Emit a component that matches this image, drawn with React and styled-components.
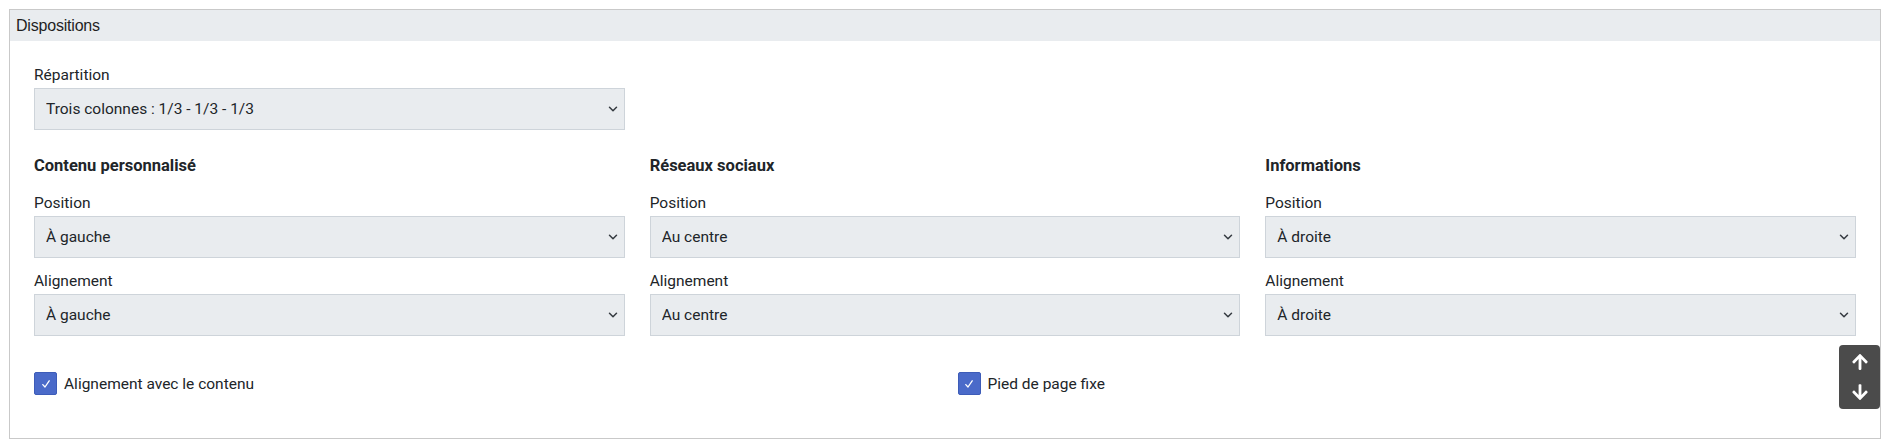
import React from 'react';
import styled, { createGlobalStyle } from 'styled-components';
import { FaArrowUp, FaArrowDown } from 'react-icons/fa';

const GlobalStyle = createGlobalStyle`
  body {
    margin: 0;
    background: #fff;
    font-family: Roboto, "Liberation Sans", Arial, sans-serif;
    color: #212529;
  }
`;

const columns = [
  { title: 'Contenu personnalisé', position: 'À gauche', align: 'À gauche' },
  { title: 'Réseaux sociaux', position: 'Au centre', align: 'Au centre' },
  { title: 'Informations', position: 'À droite', align: 'À droite' },
];

function Chevron() {
  return (
    <svg width="10" height="6" viewBox="0 0 10 6">
      <path d="M1.5 1.2l3.5 3.5 3.5-3.5" fill="none" stroke="#343a40" strokeWidth="1.5" strokeLinecap="round" strokeLinejoin="round" />
    </svg>
  );
}

function Select({ value }) {
  return (
    <SelectWrap>
      <NativeSelect defaultValue={value}>
        <option>{value}</option>
      </NativeSelect>
      <ChevronBox>
        <Chevron />
      </ChevronBox>
    </SelectWrap>
  );
}

function Field({ label, value }) {
  return (
    <FieldGroup>
      <Label>{label}</Label>
      <Select value={value} />
    </FieldGroup>
  );
}

function Check({ label }) {
  return (
    <CheckRow>
      <CheckBox>
        <svg width="10" height="10" viewBox="0 0 10 10">
          <path d="M1.8 5.6l2.2 2.4L8.2 1.8" fill="none" stroke="#fff" strokeWidth="1.3" strokeLinecap="round" strokeLinejoin="round" />
        </svg>
      </CheckBox>
      <CheckLabel>{label}</CheckLabel>
    </CheckRow>
  );
}

function App() {
  return (
    <Page>
      <GlobalStyle />
      <Panel>
        <Header>Dispositions</Header>
        <Body>
          <TopRow>
            <Field label="Répartition" value="Trois colonnes : 1/3 - 1/3 - 1/3" />
          </TopRow>
          <Columns>
            {columns.map((c) => (
              <Column key={c.title}>
                <ColumnTitle>{c.title}</ColumnTitle>
                <Field label="Position" value={c.position} />
                <Field label="Alignement" value={c.align} />
              </Column>
            ))}
          </Columns>
          <Checks>
            <Check label="Alignement avec le contenu" />
            <Check label="Pied de page fixe" />
          </Checks>
        </Body>
        <ScrollButtons>
          <ScrollBtn aria-label="Haut">
            <FaArrowUp />
          </ScrollBtn>
          <ScrollBtn aria-label="Bas">
            <FaArrowDown />
          </ScrollBtn>
        </ScrollButtons>
      </Panel>
    </Page>
  );
}

export default App;

const Page = styled.div`
  padding: 9px 5px 4px 9px;
`;

const Panel = styled.section`
  position: relative;
  border: 1px solid #c9c9c9;
  background: #fff;
`;

const Header = styled.div`
  height: 31px;
  padding: 0 6px;
  display: flex;
  align-items: center;
  background: #e9ecef;
  font-family: "Liberation Sans", Arial, sans-serif;
  font-size: 16px;
  letter-spacing: -0.2px;
  color: #1f1f1f;
`;

const Body = styled.div`
  padding: 23px 24px 43px 24px;
`;

const TopRow = styled.div`
  display: grid;
  grid-template-columns: repeat(3, 1fr);
  column-gap: 25px;
`;

const Columns = styled.div`
  display: grid;
  grid-template-columns: repeat(3, 1fr);
  column-gap: 25px;
  margin-top: 25px;
`;

const Column = styled.div`
  display: flex;
  flex-direction: column;
`;

const ColumnTitle = styled.div`
  font-size: 16.5px;
  font-weight: 700;
  line-height: 22px;
  margin-bottom: 15px;
`;

const FieldGroup = styled.div`
  & + & {
    margin-top: 12px;
  }
`;

const Label = styled.div`
  font-size: 15.5px;
  line-height: 22px;
  margin-bottom: 2px;
`;

const SelectWrap = styled.div`
  position: relative;
`;

const NativeSelect = styled.select`
  appearance: none;
  display: block;
  width: 100%;
  height: 42px;
  margin: 0;
  padding: 0 36px 0 11px;
  border: 1px solid #ced4da;
  border-radius: 0;
  background: #e9ecef;
  font-family: Roboto, "Liberation Sans", Arial, sans-serif;
  font-size: 15.5px;
  color: #212529;
  outline: none;
`;

const ChevronBox = styled.span`
  position: absolute;
  right: 7px;
  top: 50%;
  transform: translateY(-50%);
  display: flex;
  pointer-events: none;
`;

const Checks = styled.div`
  display: grid;
  grid-template-columns: 1fr 1fr;
  column-gap: 25px;
  margin-top: 36px;
`;

const CheckRow = styled.label`
  display: flex;
  align-items: center;
  gap: 7px;
`;

const CheckBox = styled.span`
  width: 23px;
  height: 23px;
  box-sizing: border-box;
  display: flex;
  align-items: center;
  justify-content: center;
  background: #4a6ac9;
  border: 1px solid #3d5cb8;
  border-radius: 2px;
`;

const CheckLabel = styled.span`
  font-size: 15.5px;
  line-height: 22px;
`;

const ScrollButtons = styled.div`
  position: absolute;
  right: 0;
  top: 335px;
  width: 41px;
  height: 64px;
  display: flex;
  flex-direction: column;
  justify-content: center;
  gap: 6px;
  background: #4b4b4b;
  border-radius: 4px;
`;

const ScrollBtn = styled.button`
  display: flex;
  align-items: center;
  justify-content: center;
  height: 24px;
  padding: 0;
  border: none;
  background: transparent;
  color: #fff;
  font-size: 18px;
  cursor: pointer;
`;
